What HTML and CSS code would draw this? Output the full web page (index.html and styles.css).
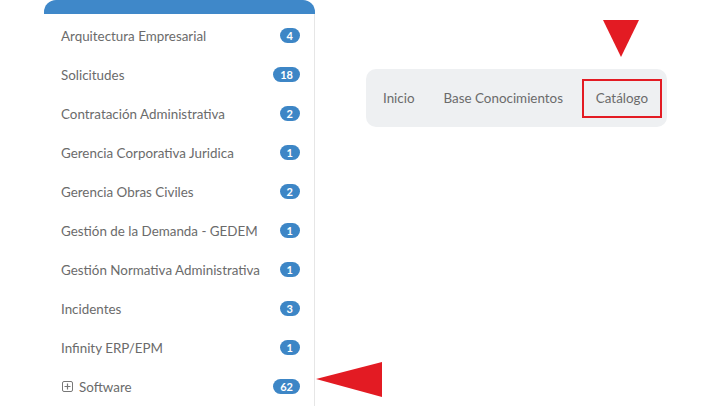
FILE: index.html
```html
<!DOCTYPE html>
<html lang="es">
<head>
  <meta charset="UTF-8" />
  <meta name="viewport" content="width=device-width, initial-scale=1.0"/>
  <title>Catálogo</title>
  <link rel="stylesheet" href="styles.css">
</head>
<body>
  <div class="page">
    <div class="sidebar">
      <div class="sidebar-head"></div>
      <ul class="cat-list">
        <li><span>Arquitectura Empresarial</span><span class="badge">4</span></li>
        <li><span>Solicitudes</span><span class="badge">18</span></li>
        <li><span>Contratación Administrativa</span><span class="badge">2</span></li>
        <li><span>Gerencia Corporativa Juridica</span><span class="badge">1</span></li>
        <li><span>Gerencia Obras Civiles</span><span class="badge">2</span></li>
        <li><span>Gestión de la Demanda - GEDEM</span><span class="badge">1</span></li>
        <li><span>Gestión Normativa Administrativa</span><span class="badge">1</span></li>
        <li><span>Incidentes</span><span class="badge">3</span></li>
        <li><span>Infinity ERP/EPM</span><span class="badge">1</span></li>
        <li>
          <span class="expand">
            <svg width="11" height="11" viewBox="0 0 11 11"><rect x="0.5" y="0.5" width="10" height="10" rx="1.5" fill="none" stroke="#777"/><path d="M5.5 2.5v6M2.5 5.5h6" stroke="#777" stroke-width="1.2"/></svg>
            Software
          </span>
          <span class="badge">62</span>
        </li>
      </ul>
    </div>

    <div class="main">
      <nav class="crumbs">
        <a href="#">Inicio</a>
        <a href="#">Base Conocimientos</a>
        <a href="#" class="marked">Catálogo</a>
      </nav>
    </div>
  </div>

  <!-- callout arrows -->
  <svg class="arrow-down" width="36" height="37" viewBox="0 0 36 37"><polygon points="0,0 36,0 18,37" fill="#e31b23"/></svg>
  <svg class="arrow-left" width="66" height="35" viewBox="0 0 66 35"><polygon points="0,17 66,0 66,35" fill="#e31b23"/></svg>
</body>
</html>
```

FILE: styles.css
```css
body {
  margin: 0;
  font-family: Lato, "Open Sans", sans-serif;
  background: #fff;
  color: #6b6b6b;
}

.page {
  display: flex;
  height: 406px;
  overflow: hidden;
}

.sidebar {
  width: 271px;
  margin-left: 44px;
  display: flex;
  flex-direction: column;
}

.sidebar-head {
  height: 16px;
  background: #3f88c9;
  border-radius: 12px 12px 0 0;
}

.cat-list {
  list-style: none;
  margin: 0;
  padding: 2px 0 0;
  flex: 1;
  border-right: 1px solid #e6e6e6;
}

.cat-list li {
  height: 39px;
  display: flex;
  align-items: center;
  justify-content: space-between;
  padding: 0 14px 0 17px;
  font-size: 13.4px;
}

.expand {
  display: flex;
  align-items: center;
  gap: 6px;
}

.expand svg {
  margin-left: 1px;
}

.badge {
  background: #3d86c6;
  color: #fff;
  font-size: 11px;
  font-weight: bold;
  line-height: 15px;
  min-width: 6px;
  padding: 0 7px;
  border-radius: 8px;
  text-align: center;
}

.main {
  padding: 69px 0 0 51px;
}

.crumbs {
  display: flex;
  align-items: center;
  gap: 3px;
  width: 301px;
  height: 58px;
  padding: 0 5px 0 4px;
  box-sizing: border-box;
  background: #eef0f2;
  border-radius: 10px;
}

.crumbs a {
  flex-shrink: 0;
  white-space: nowrap;
  color: #6b6b6b;
  text-decoration: none;
  font-size: 13.4px;
  padding: 0 13px;
  line-height: 35px;
}

.crumbs a.marked {
  border: 2px solid #e31b23;
  padding: 0 12px;
  margin-left: auto;
}

.arrow-down {
  position: absolute;
  left: 603px;
  top: 20px;
}

.arrow-left {
  position: absolute;
  left: 316px;
  top: 362px;
}
```
